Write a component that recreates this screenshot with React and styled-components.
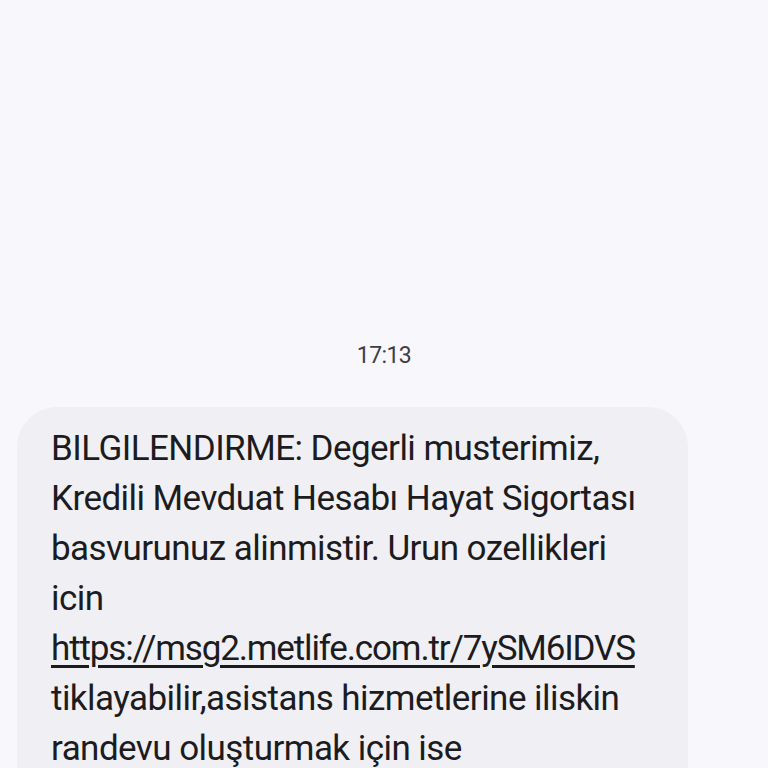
import React from 'react';
import styled, { createGlobalStyle } from 'styled-components';

const GlobalStyle = createGlobalStyle`
  html, body {
    margin: 0;
    padding: 0;
    background: #f8f8fc;
  }
  body {
    font-family: Roboto, "Noto Sans", sans-serif;
  }
`;

const Screen = styled.div`
  width: 768px;
  height: 768px;
  overflow: hidden;
  display: flex;
  flex-direction: column;
  padding-top: 340px;
  box-sizing: border-box;
`;

const Time = styled.div`
  text-align: center;
  font-size: 23px;
  letter-spacing: -0.6px;
  color: #3e3e44;
  line-height: 32px;
  margin-bottom: 35px;
`;

const Bubble = styled.div`
  margin-left: 17px;
  width: 671px;
  box-sizing: border-box;
  background: #f0f0f4;
  border-radius: 40px;
  padding: 17px 0 40px 34px;
`;

const Line = styled.div`
  font-size: 35px;
  line-height: 50px;
  color: #1c1c20;
  letter-spacing: -0.55px;
  white-space: nowrap;
`;

const Link = styled.a`
  color: inherit;
  letter-spacing: -1.15px;
  text-decoration: underline;
  text-underline-offset: 5px;
  text-decoration-thickness: 3px;
`;

const lines = [
  'BILGILENDIRME: Degerli musterimiz,',
  'Kredili Mevduat Hesabı Hayat Sigortası',
  'basvurunuz alinmistir. Urun ozellikleri',
  'icin',
];

const rest = [
  'tiklayabilir,asistans hizmetlerine iliskin',
  'randevu oluşturmak için ise',
];

export default function App() {
  return (
    <>
      <GlobalStyle />
      <Screen>
        <Time>17:13</Time>
        <Bubble>
          {lines.map((t) => (
            <Line key={t}>{t}</Line>
          ))}
          <Line>
            <Link href="#">https://msg2.metlife.com.tr/7ySM6IDVS</Link>
          </Line>
          {rest.map((t) => (
            <Line key={t}>{t}</Line>
          ))}
        </Bubble>
      </Screen>
    </>
  );
}
